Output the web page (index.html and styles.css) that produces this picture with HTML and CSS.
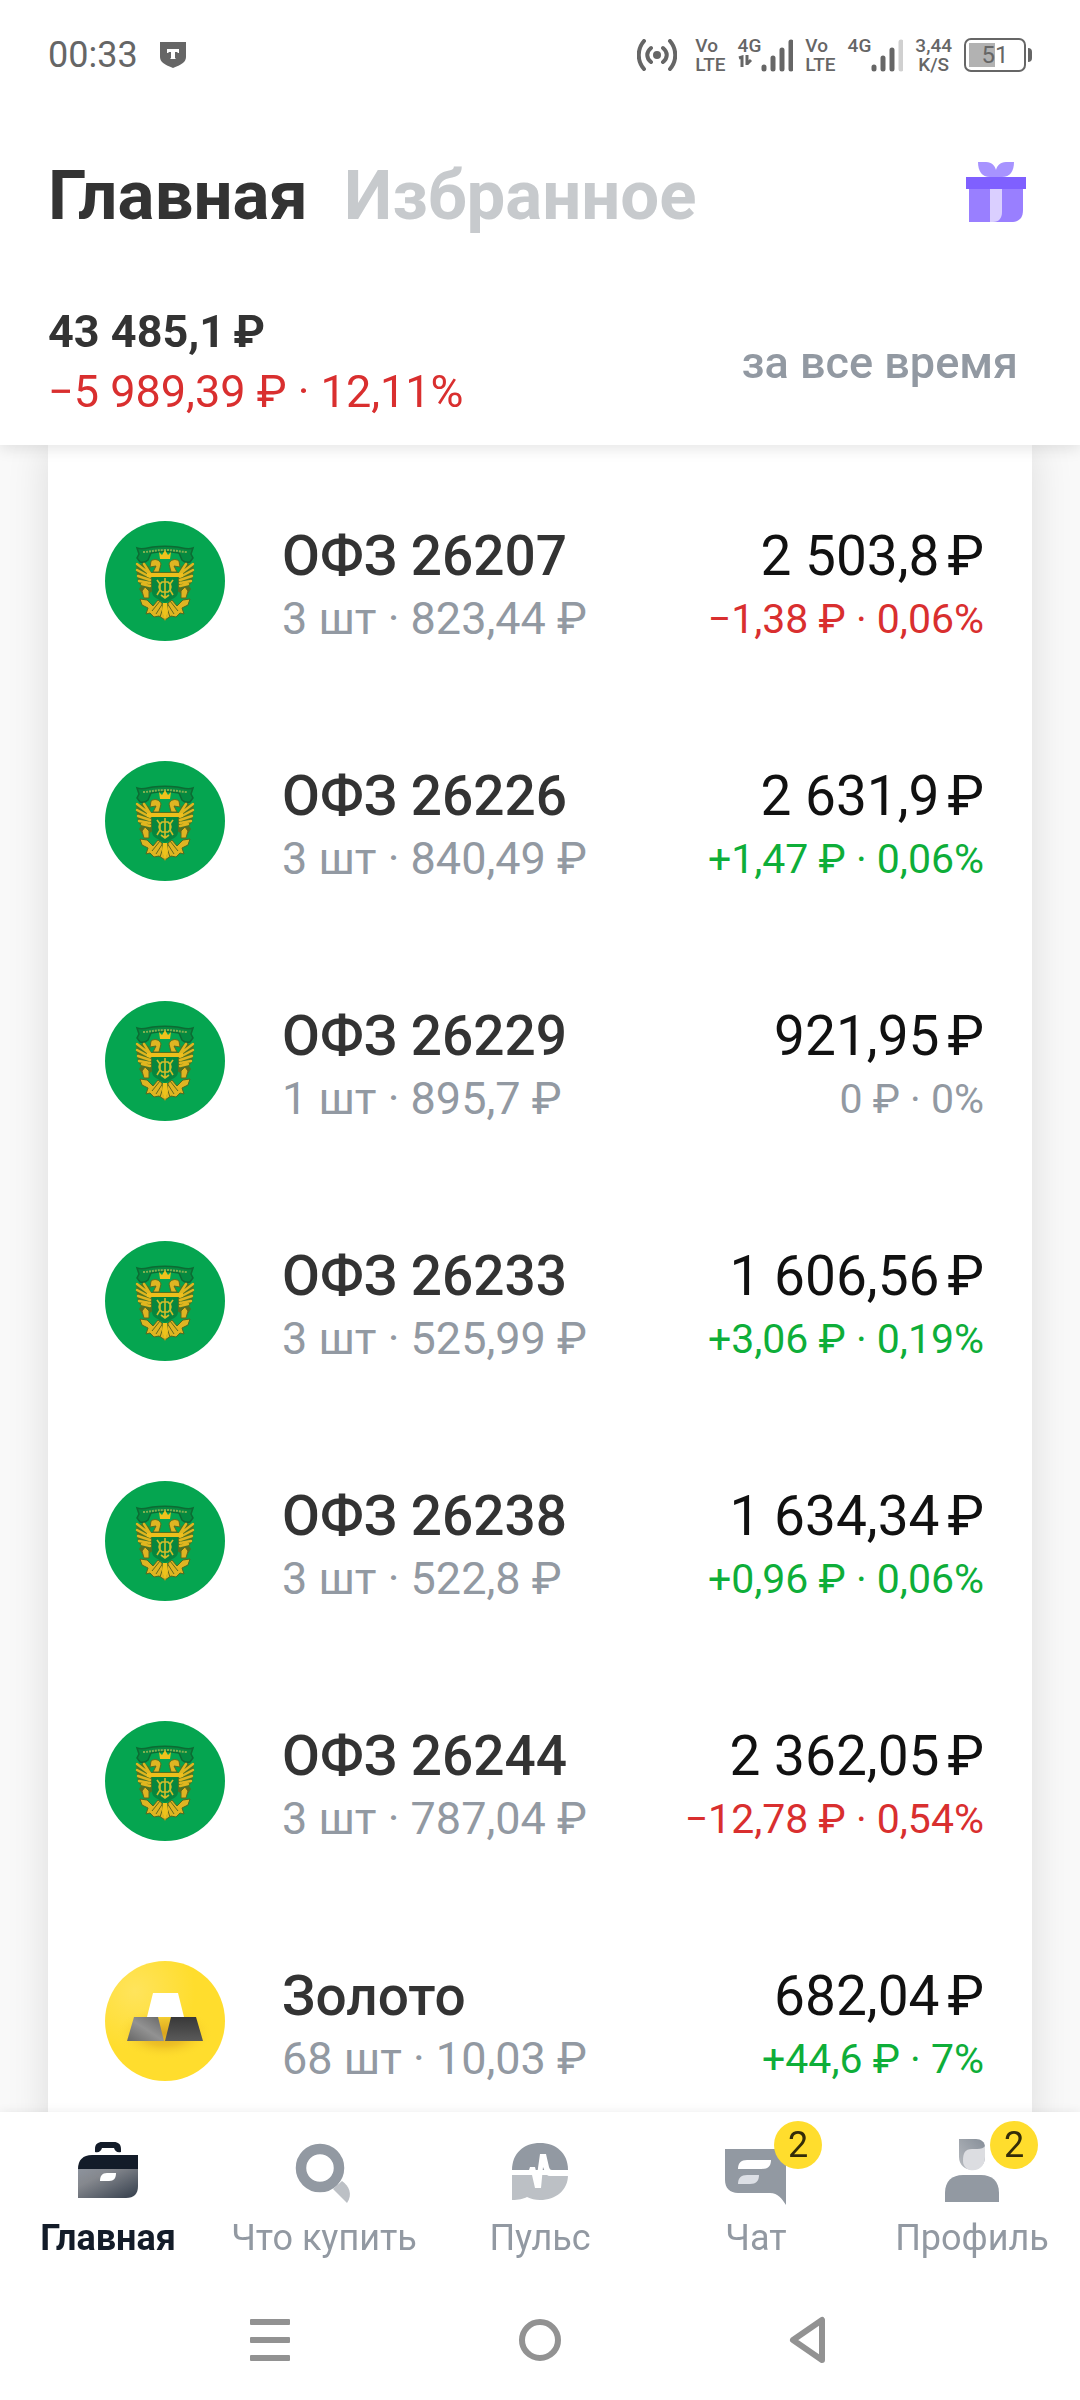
FILE: index.html
```html
<!DOCTYPE html>
<html lang="ru">
<head>
  <meta charset="UTF-8" />
  <title>Главная</title>
  <link rel="stylesheet" href="styles.css">
</head>
<body>
  <svg class="defs" aria-hidden="true">
    <defs>
      <linearGradient id="caseFill" x1="0" y1="0" x2="1" y2="1">
        <stop offset="0" stop-color="#8d939d" />
        <stop offset="0.3" stop-color="#85888e" />
        <stop offset="1" stop-color="#333d4b" />
      </linearGradient>
      <linearGradient id="hairFill" x1="0" y1="1" x2="1" y2="0">
        <stop offset="0" stop-color="#b8bbc0" />
        <stop offset="1" stop-color="#868e98" />
      </linearGradient>
      <linearGradient id="barLeft" x1="0" y1="1" x2="1" y2="0">
        <stop offset="0" stop-color="#666" />
        <stop offset="0.5" stop-color="#929292" />
        <stop offset="1" stop-color="#666" />
      </linearGradient>
      <linearGradient id="barRight" x1="0" y1="0" x2="0" y2="1">
        <stop offset="0" stop-color="#383838" />
        <stop offset="1" stop-color="#5a5a5a" />
      </linearGradient>
      <radialGradient id="goldFill" cx="0.25" cy="0.25" r="0.5">
        <stop offset="0" stop-color="#ffe45c" />
        <stop offset="1" stop-color="#ffdd2d" />
      </radialGradient>
      <radialGradient id="goldShade">
        <stop offset="0" stop-color="#d9a41e" />
        <stop offset="0.5" stop-color="#e2b022" stop-opacity="0.6" />
        <stop offset="1" stop-color="#ffdd2d" stop-opacity="0" />
      </radialGradient>
    </defs>
    <symbol id="emblem" viewBox="0 0 120 120">
      <circle cx="60" cy="60" r="60" fill="#05a550" />
      <!-- ribbon -->
      <path d="M32 27c5 2 10 0 16-1 8-1 16-1 24 0 6 1 11 3 16 1l-2 6 2 4-3 4c-4 1-6 0-8-2l-3-7c-9-2-19-2-28 0l-3 7c-2 2-4 3-8 2l-3-4 2-4z" fill="#068a40" stroke="#0d6a33" stroke-width="1.5" />
      <path d="M38 31c7 0 12-2 22-2s15 2 22 2" fill="none" stroke="#7fae50" stroke-width="2" stroke-dasharray="2 1" />
      <!-- wings, one half mirrored -->
      <g id="wing">
        <path d="M31 41l4 3 4-3 5 5 2 5h14v6H48v13l-5 3-5 1-4-6 2-3-3-4-1-6z" fill="#4f7322" />
        <path d="M45 53L32 43M45 56L32 49M45 59L33 55M45 62L34 60M45 65L37 63M46 54l-7-11" fill="none" stroke="#e0b61f" stroke-width="2.4" stroke-linecap="round" />
        <path d="M42 52h18v4H42z" fill="#edbf1c" />
        <path d="M46 40c4-3 9-1 10 3l-2 8h-6l3-6-6 1z" fill="#dfb522" stroke="#5f6a1d" />
        <path d="M40 66l4 4v7h-5l-2-7z" fill="#dfb522" stroke="#5f6a1d" />
        <path d="M35 78l7 1 6 6 5-6 4 3 3 17-6-4-5 1-4-4-4 1 2-6-6-3z" fill="#dfb522" stroke="#4f6a22" />
        <path d="M58 82l-7 11M55 80l-8 10M59 84l-4 12" fill="none" stroke="#5f6a1d" />
      </g>
      <use href="#wing" transform="matrix(-1 0 0 1 120 0)" />
      <path d="M54 31l3 3 3-5 3 5 3-3-1 7H55z" fill="#edc21c" />
      <path d="M58 82h4l1 8-3 10-3-10z" fill="#edc21c" />
      <path d="M47 56h26v15c0 6-7 7-13 11-6-4-13-5-13-11z" fill="#07863e" />
      <path d="M52 59l3 4v6l-3 5M68 59l-3 4v6l3 5M60 57v21M57 61c-4 3-4 7 0 10h6c4-3 4-7 0-10zM56 74l4 3 4-3" fill="none" stroke="#d2bd2a" stroke-width="1.6" />
    </symbol>
  </svg>

  <div class="statusbar">
    <div class="status-left">
      <span class="clock">00:33</span>
      <svg width="26" height="26" viewBox="0 0 26 26">
        <path d="M0 0h26v15c0 5-5 8-13 11C5 23 0 20 0 15z" fill="#666" />
        <path d="M7 7h12v4h-1l-1-1h-2v6l1 1h-6l1-1v-6H9l-1 1H7z" fill="#fff" />
      </svg>
    </div>
    <div class="status-right">
      <svg class="hotspot" width="40" height="32" viewBox="0 0 40 32" fill="none" stroke="#666" stroke-width="4" stroke-linecap="round">
        <circle cx="20" cy="16" r="4" fill="#666" stroke="none" />
        <path d="M14 9c-5 4-5 10 0 14M26 9c5 4 5 10 0 14M7 2c-7 8-7 20 0 28M33 2c7 8 7 20 0 28" />
      </svg>
      <div class="stack"><span>Vo</span><span>LTE</span></div>
      <div class="network">
        <div class="stack">
          <span>4G</span>
          <svg width="15" height="12" viewBox="0 0 15 12" fill="none" stroke="#666" stroke-width="3"><path d="M1 3l3-1v10M9 0v10M13 5l-4 4" /></svg>
        </div>
        <svg width="32" height="33" viewBox="0 0 32 33" fill="none" stroke="#666" stroke-width="5" stroke-linecap="round"><path d="M3 28v2M12 19v11M21 11v19M30 3v27" /></svg>
      </div>
      <div class="stack"><span>Vo</span><span>LTE</span></div>
      <div class="network">
        <div class="stack"><span>4G</span></div>
        <svg width="32" height="33" viewBox="0 0 32 33" fill="none" stroke="#666" stroke-width="5" stroke-linecap="round"><path d="M3 28v2M12 19v11M21 11v19" /><path d="M30 3v27" stroke="#d0d0d0" /></svg>
      </div>
      <div class="stack speed"><span>3,44</span><span>K/S</span></div>
      <div class="battery"><span>51</span></div>
    </div>
  </div>

  <header class="header">
    <div class="title-row">
      <nav class="tabs">
        <a class="tab active" href="#">Главная</a>
        <a class="tab" href="#">Избранное</a>
      </nav>
      <button class="gift" aria-label="Подарок">
        <svg width="60" height="60" viewBox="0 0 60 60">
          <path d="M12 0h8c6 0 9 4 10 8 1-4 4-8 10-8h8c0 9-4 15-12 15H24C16 15 12 9 12 0z" fill="#a793ff" />
          <path d="M3 27h54v21c0 8-4 12-12 12H3z" fill="#997fff" />
          <path d="M24 27h12v23c0 6-3 10-9 10h-3z" fill="#dacfff" />
          <path d="M0 15h60v12H0z" fill="#7f60ff" />
        </svg>
      </button>
    </div>
    <div class="summary">
      <div>
        <div class="total">43 485,1<span class="currency">₽</span></div>
        <div class="total-change minus">−5 989,39 ₽ · 12,11%</div>
      </div>
      <button class="period">за все время</button>
    </div>
  </header>

  <main class="content">
    <ul class="card">
      <li class="asset">
        <svg class="logo"><use href="#emblem" /></svg>
        <div class="info"><div class="name">ОФЗ 26207</div><div class="count">3 шт · 823,44 ₽</div></div>
        <div class="value"><div class="price">2 503,8<span class="currency">₽</span></div><div class="change minus">−1,38 ₽ · 0,06%</div></div>
      </li>
      <li class="asset">
        <svg class="logo"><use href="#emblem" /></svg>
        <div class="info"><div class="name">ОФЗ 26226</div><div class="count">3 шт · 840,49 ₽</div></div>
        <div class="value"><div class="price">2 631,9<span class="currency">₽</span></div><div class="change plus">+1,47 ₽ · 0,06%</div></div>
      </li>
      <li class="asset">
        <svg class="logo"><use href="#emblem" /></svg>
        <div class="info"><div class="name">ОФЗ 26229</div><div class="count">1 шт · 895,7 ₽</div></div>
        <div class="value"><div class="price">921,95<span class="currency">₽</span></div><div class="change">0 ₽ · 0%</div></div>
      </li>
      <li class="asset">
        <svg class="logo"><use href="#emblem" /></svg>
        <div class="info"><div class="name">ОФЗ 26233</div><div class="count">3 шт · 525,99 ₽</div></div>
        <div class="value"><div class="price">1 606,56<span class="currency">₽</span></div><div class="change plus">+3,06 ₽ · 0,19%</div></div>
      </li>
      <li class="asset">
        <svg class="logo"><use href="#emblem" /></svg>
        <div class="info"><div class="name">ОФЗ 26238</div><div class="count">3 шт · 522,8 ₽</div></div>
        <div class="value"><div class="price">1 634,34<span class="currency">₽</span></div><div class="change plus">+0,96 ₽ · 0,06%</div></div>
      </li>
      <li class="asset">
        <svg class="logo"><use href="#emblem" /></svg>
        <div class="info"><div class="name">ОФЗ 26244</div><div class="count">3 шт · 787,04 ₽</div></div>
        <div class="value"><div class="price">2 362,05<span class="currency">₽</span></div><div class="change minus">−12,78 ₽ · 0,54%</div></div>
      </li>
      <li class="asset">
        <svg class="logo" viewBox="0 0 120 120">
          <circle cx="60" cy="60" r="60" fill="url(#goldFill)" />
          <ellipse cx="60" cy="72" rx="48" ry="26" fill="url(#goldShade)" />
          <path d="M48 32h25l6 24H42z" fill="#fff" />
          <path d="M29 56h24l6 24H22z" fill="url(#barLeft)" />
          <path d="M66 56h25l7 24H60z" fill="url(#barRight)" />
        </svg>
        <div class="info"><div class="name">Золото</div><div class="count">68 шт · 10,03 ₽</div></div>
        <div class="value"><div class="price">682,04<span class="currency">₽</span></div><div class="change plus">+44,6 ₽ · 7%</div></div>
      </li>
    </ul>
  </main>

  <nav class="bottom-nav">
    <a class="nav-item active" href="#">
      <span class="nav-icon">
        <svg width="80" height="74" viewBox="0 0 80 74">
          <path d="M27 20v-3c0-5 3-7 7-7h12c4 0 7 2 7 7v3c-4 1-6-1-7-4H34c-1 3-3 5-7 4z" fill="#131c29" />
          <path d="M10 37h60v17c0 8-4 12-12 12H10z" fill="url(#caseFill)" />
          <path d="M10 37c0-9 5-14 14-14h46v14z" fill="#131c29" />
          <path d="M32 49c0-5 2-8 7-8h9c0 5-2 8-7 8z" fill="#fff" />
        </svg>
      </span>
      Главная
    </a>
    <a class="nav-item" href="#">
      <span class="nav-icon">
        <svg width="80" height="74" viewBox="0 0 80 74">
          <path d="M49 57l9-8c7 5 11 13 5 22z" fill="#bcc0c5" />
          <circle cx="36" cy="36" r="19" fill="none" stroke="#9299a2" stroke-width="10.5" />
        </svg>
      </span>
      Что купить
    </a>
    <a class="nav-item" href="#">
      <span class="nav-icon">
        <svg width="80" height="74" viewBox="0 0 80 74">
          <path d="M12 38c0-17 12-27 28-27s28 10 28 27z" fill="#9299a2" />
          <path d="M12 43h56c0 15-12 25-28 25-5 0-9-1-13-3-4 2-8 3-15 3z" fill="#bcc0c5" />
          <path d="M12 38h17l1-3h5l2 8 3-21h6l3 13c1 3 2 3 4 3h16v6H50c-3 0-4-2-5-4l-2-5-2 21h-6l-3-13H12z" fill="#fff" />
        </svg>
      </span>
      Пульс
    </a>
    <a class="nav-item" href="#">
      <span class="nav-icon">
        <svg width="80" height="74" viewBox="0 0 80 74">
          <path d="M9 17h61v56c-4-6-8-12-16-12H22c-8 0-13-5-13-13z" fill="#9299a2" />
          <path d="M22 37c0-6 3-9 9-9h24c0 6-3 9-9 9z" fill="#fff" />
          <path d="M22 52c0-6 3-9 9-9h12c0 6-3 9-9 9z" fill="#dcdfe5" />
        </svg>
        <span class="badge">2</span>
      </span>
      Чат
    </a>
    <a class="nav-item" href="#">
      <span class="nav-icon">
        <svg width="80" height="74" viewBox="0 0 80 74">
          <path d="M27 7h17c5 0 9 3 9 8v10c0 17-26 17-26 0z" fill="url(#hairFill)" />
          <path d="M31 29c0-8 2-12 9-12h5c4 0 7-1 8-3v11c0 17-22 17-22 4z" fill="#dcdde1" />
          <path d="M13 70v-9c0-12 7-18 18-18h18c11 0 18 6 18 18v9z" fill="#9299a2" />
        </svg>
        <span class="badge">2</span>
      </span>
      Профиль
    </a>
  </nav>

  <div class="system-nav">
    <button aria-label="Недавние">
      <svg width="50" height="50" viewBox="0 0 50 50" fill="#929292"><rect x="5" y="4" width="40" height="6" rx="1" /><rect x="5" y="22" width="40" height="6" rx="1" /><rect x="5" y="40" width="40" height="6" rx="1" /></svg>
    </button>
    <button aria-label="Домой">
      <svg width="50" height="50" viewBox="0 0 50 50" fill="none" stroke="#929292" stroke-width="6"><circle cx="25" cy="25" r="18" /></svg>
    </button>
    <button aria-label="Назад">
      <svg width="50" height="50" viewBox="0 0 50 50" fill="none" stroke="#929292" stroke-width="6" stroke-linejoin="round"><path d="M37 5v40L8 25z" /></svg>
    </button>
  </div>
</body>
</html>
```
FILE: styles.css
```css
* {
  box-sizing: border-box;
}

body {
  margin: 0;
  height: 100vh;
  display: flex;
  flex-direction: column;
  font-family: Roboto, "Noto Sans", sans-serif;
  background: #fff;
  color: #333;
}

a {
  color: inherit;
  text-decoration: none;
}

button {
  padding: 0;
  border: none;
  background: none;
  font: inherit;
  cursor: pointer;
}

svg {
  display: block;
}

.defs {
  position: absolute;
  width: 0;
  height: 0;
}

/* status bar */
.statusbar {
  position: relative;
  z-index: 2;
  flex: none;
  display: flex;
  justify-content: space-between;
  align-items: center;
  height: 110px;
  padding: 0 48px;
  background: #fff;
  color: #666;
}

.status-left,
.status-right,
.network {
  display: flex;
  align-items: center;
}

.status-left {
  gap: 22px;
}

.clock {
  font-size: 36px;
}

.status-right {
  gap: 12px;
}

.hotspot {
  margin-right: 6px;
}

.stack {
  height: 38px;
  font-size: 19px;
  line-height: 19px;
  font-weight: 500;
}

.stack span {
  display: block;
}

.speed {
  text-align: center;
}

.battery {
  position: relative;
  width: 62px;
  height: 34px;
  border: 2px solid #666;
  border-radius: 7px;
  padding: 3px;
  margin-right: 6px;
  background: linear-gradient(#b2b2b2, #b2b2b2) 3px 3px / 26px 24px no-repeat;
  font-size: 24px;
  line-height: 24px;
  text-align: center;
}

.battery::after {
  content: "";
  position: absolute;
  right: -8px;
  top: 8px;
  width: 4px;
  height: 14px;
  border-radius: 0 4px 4px 0;
  background: #666;
}

/* header */
.header {
  position: relative;
  z-index: 1;
  flex: none;
  padding: 44px 62px 23px 48px;
  box-shadow: 0 4px 14px rgba(0, 0, 0, 0.1);
  background: #fff;
}

.title-row,
.summary {
  display: flex;
  justify-content: space-between;
  align-items: center;
}

.tabs {
  display: flex;
  gap: 36px;
  font-size: 69px;
  line-height: 84px;
  font-weight: 700;
}

.tab {
  color: #c7cacd;
}

.tab.active {
  color: #333;
}

.gift {
  margin: 0 -8px 8px 0;
}

.summary {
  margin-top: 64px;
}

.total,
.total-change {
  font-size: 45px;
  line-height: 60px;
}

.total {
  font-weight: 700;
}

.currency {
  margin-left: 8px;
}

.period {
  font-size: 45px;
  font-weight: 500;
  color: #9299a2;
}

.minus {
  color: #d92f2f;
}

/* portfolio */
.content {
  flex: 1;
  min-height: 0;
  padding: 0 48px;
  overflow-y: auto;
  scrollbar-width: none;
  background: #f9f9f9;
}

.card {
  list-style: none;
  margin: 0;
  padding: 16px 48px 0 57px;
  background: #fff;
  box-shadow: 0 0 40px rgba(0, 0, 0, 0.12);
}

.asset {
  display: flex;
  align-items: center;
  height: 240px;
}

.logo {
  width: 120px;
  height: 120px;
  margin-right: 57px;
}

.info {
  flex: 1;
}

.info,
.value {
  padding-top: 12px;
}

.name,
.price {
  font-size: 55px;
  line-height: 64px;
}

.name {
  font-weight: 500;
}

.price {
  color: #111;
}

.count,
.change {
  line-height: 62px;
}

.count {
  font-size: 45px;
  color: #9299a2;
}

.value {
  text-align: right;
}

.change {
  font-size: 41px;
  color: #9299a2;
}

.change.minus {
  color: #d92f2f;
}

.change.plus {
  color: #0eae39;
}

/* bottom navigation */
.bottom-nav {
  position: relative;
  flex: none;
  display: flex;
  height: 168px;
  padding-top: 20px;
  background: #fff;
  box-shadow: 0 0 10px rgba(0, 0, 0, 0.08);
}

.nav-item {
  flex: 1 1 0;
  display: flex;
  flex-direction: column;
  align-items: center;
  gap: 10px;
  font-size: 36px;
  line-height: 44px;
  white-space: nowrap;
  color: #9299a2;
}

.nav-item.active {
  font-weight: 700;
  color: #131c29;
}

.nav-icon {
  position: relative;
}

.badge {
  position: absolute;
  top: -11px;
  right: -26px;
  width: 48px;
  height: 48px;
  border-radius: 50%;
  background: #ffdd2d;
  color: #332c09;
  line-height: 48px;
  text-align: center;
}

.system-nav {
  position: relative;
  flex: none;
  display: flex;
  height: 120px;
  padding: 0 12.5%;
  background: #fff;
}

.system-nav button {
  flex: 1;
  display: flex;
  justify-content: center;
  align-items: center;
}
```
